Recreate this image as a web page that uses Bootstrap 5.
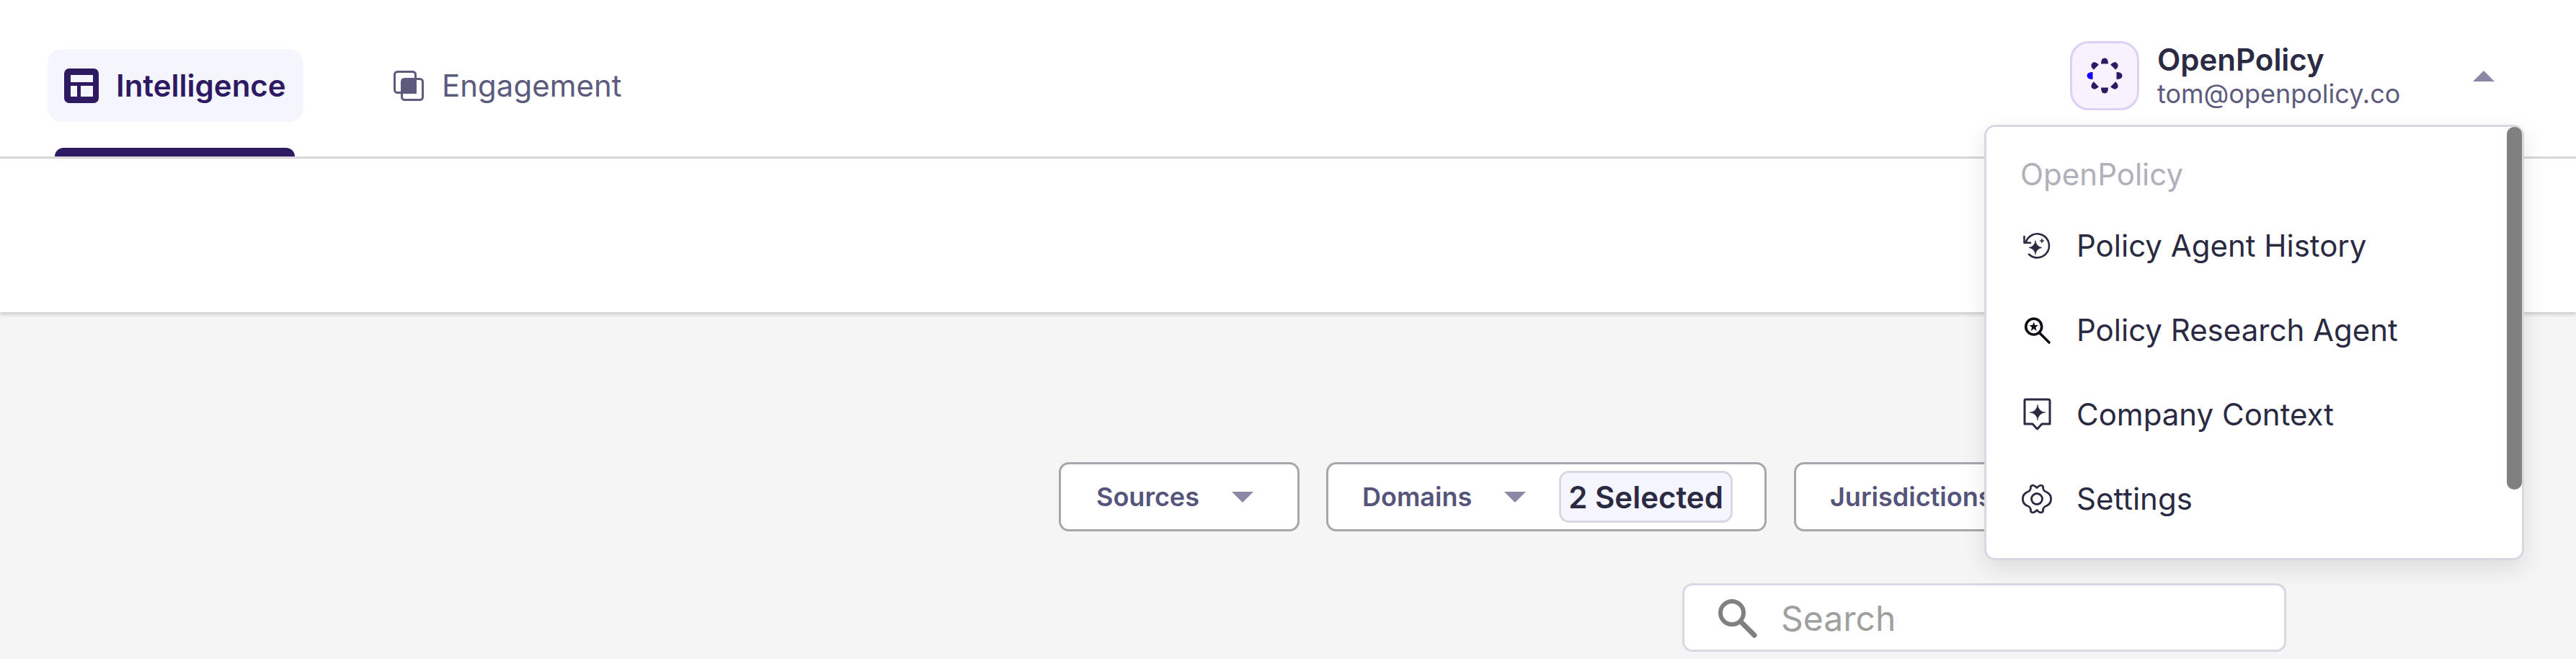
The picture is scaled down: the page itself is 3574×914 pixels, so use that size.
<!doctype html>
<html lang="en">
<head>
<meta charset="utf-8">
<title>OpenPolicy</title>
<link href="https://cdn.jsdelivr.net/npm/bootstrap@5.3.0/dist/css/bootstrap.min.css" rel="stylesheet">
<style>
html,body{height:914px;overflow:hidden}
body{font-family:Inter,"Liberation Sans",sans-serif;background:#f5f5f5;color:#2a2a42}
.op-page{height:914px}
.op-top{height:220px;background:#fff;border-bottom:3px solid #d9d9d9;padding-left:66px;padding-right:113px}
.op-tab-col{width:355px;margin-top:68px}
.op-pill{height:101px;padding:0 20px 0 23px;gap:24px;font-size:42px;font-weight:600;color:#2d1a63;background:#f5f5fd;border-radius:20px}
.op-tab-bar{height:12px;margin:36px 12px 0 10px;background:#2d1a63;border-radius:12px 12px 0 0}
.op-tab-plain{margin-top:68px;margin-left:125px;height:101px;gap:25px;font-size:42px;color:#5c5b7e}
.op-user{margin-top:57px;margin-left:auto;height:96px}
.op-logo{width:96px;height:96px;border:3px solid #dcd0f5;background:#f7f2fe;border-radius:26px}
.op-user-txt{margin-left:25px;width:438px}
.op-user-name{font-size:42px;font-weight:600;line-height:48px;margin-bottom:2px;color:#2a2a42}
.op-user-mail{font-size:36px;line-height:42px;color:#5c5b7e}
.op-tri-up{width:0;height:0;border-left:15px solid transparent;border-right:15px solid transparent;border-bottom:15px solid #8a88a6}
.op-tri-down{width:0;height:0;border-left:15px solid transparent;border-right:15px solid transparent;border-top:15px solid #8a88a6}
.op-sub{height:213px;background:#fff;box-shadow:0 3px 5px rgba(0,0,0,.18)}
.op-main{padding:208px 402px 0 0}
.op-filter-row{gap:37px}
.op-filter{height:96px;background:#fff;border:3px solid #a6a6ad;border-radius:14px;padding:0 44px 0 47px;font-size:36px;font-weight:600;color:#55547a}
.op-filter .op-tri-down{margin-left:45px}
.op-f1{width:334px;padding-left:49px}
.op-f2{width:611px}
.op-f3{width:683px;margin-left:1px}
.op-chip{height:72px;margin-left:46px;padding:0 10px;border:3px solid #d9d8e2;background:#f5f5fd;border-radius:14px;font-size:42px;font-weight:600;color:#2a2a42;white-space:nowrap;flex:none}
.op-search{width:838px;height:95px;margin-top:72px;background:#fff;border:3px solid #d9d8e2;border-radius:14px;padding-left:45px;gap:33px}
.op-search-txt{font-size:48px;color:#a0a0a0;padding-top:2px}
.op-menu{top:173px;right:72px;width:749px;height:604px;border:3px solid #d9d8e2;border-radius:15px;padding:0;background:#fff;box-shadow:0 12px 32px rgba(0,0,0,.1)}
.op-menu.dropdown-menu{display:block;position:absolute;margin:0}
.op-head{padding:0 0 0 47px;margin-top:43px;height:46px;line-height:46px;font-size:42px;color:#b0b0ba}
.op-item{display:flex;align-items:center;height:117px;padding:0 0 0 50px;gap:35px;font-size:42px;color:#2a2a42}
.op-head+.op-item{margin-top:17px}
.op-item svg{flex:none}
.op-item svg.op-gear{margin-left:-1px;margin-right:-1px}
.op-scroll{top:0;right:0;width:21px;height:503px;background:#808080;border-radius:10px}
</style>
</head>
<body>
<div class="op-page position-relative">
  <header class="op-top d-flex align-items-start">
    <div class="op-tab-col">
      <div class="op-pill d-flex align-items-center">
        <svg width="48" height="48" viewBox="0 0 48 48"><rect width="48" height="48" rx="7" fill="#2d1a63"/><rect x="9" y="9" width="31" height="10" fill="#f5f5fd"/><rect x="9" y="24" width="9" height="15" fill="#f5f5fd"/><rect x="23" y="24" width="17" height="15" fill="#f5f5fd"/></svg>
        <span>Intelligence</span>
      </div>
      <div class="op-tab-bar"></div>
    </div>
    <div class="op-tab-plain d-flex align-items-center">
      <svg width="42" height="42" viewBox="0 0 42 42"><rect x="11" y="11" width="21" height="21" fill="#5c5b7e"/><rect x="1.5" y="1.5" width="29" height="29" rx="4" fill="none" stroke="#5c5b7e" stroke-width="3"/><rect x="11.5" y="11.5" width="29" height="29" rx="4" fill="none" stroke="#5c5b7e" stroke-width="3"/></svg>
      <span>Engagement</span>
    </div>
    <div class="op-user d-flex align-items-center">
      <div class="op-logo d-flex align-items-center justify-content-center flex-shrink-0">
        <svg width="50" height="50" viewBox="-25 -25 50 50">
          <g fill="#2d1a63">
            <path d="M-5 -16.500Q-5 -24.500 0 -24.500Q5 -24.500 5 -16.500Z"/>
            <path d="M-5 -16.500Q-5 -24.500 0 -24.500Q5 -24.500 5 -16.500Z" transform="rotate(45)"/>
            <path d="M-5 -16.500Q-5 -24.500 0 -24.500Q5 -24.500 5 -16.500Z" transform="rotate(90)"/>
            <path d="M-5 -16.500Q-5 -24.500 0 -24.500Q5 -24.500 5 -16.500Z" transform="rotate(135)"/>
            <path d="M-5 -16.500Q-5 -24.500 0 -24.500Q5 -24.500 5 -16.500Z" transform="rotate(180)"/>
            <path d="M-5 -16.500Q-5 -24.500 0 -24.500Q5 -24.500 5 -16.500Z" transform="rotate(225)"/>
            <path d="M-5 -16.500Q-5 -24.500 0 -24.500Q5 -24.500 5 -16.500Z" transform="rotate(315)"/>
            <path d="M-5 -16.500Q-5 -24.500 0 -24.500Q5 -24.500 5 -16.500Z" transform="rotate(270)" fill="#1a00ff"/>
          </g>
        </svg>
      </div>
      <div class="op-user-txt">
        <div class="op-user-name">OpenPolicy</div>
        <div class="op-user-mail">tom@openpolicy.co</div>
      </div>
      <div class="op-tri-up"></div>
    </div>
  </header>
  <div class="op-sub"></div>
  <main class="op-main d-flex flex-column align-items-end">
    <div class="op-filter-row d-flex">
      <div class="op-filter op-f1 d-flex align-items-center"><span>Sources</span><div class="op-tri-down"></div></div>
      <div class="op-filter op-f2 d-flex align-items-center"><span>Domains</span><div class="op-tri-down"></div><div class="op-chip d-flex align-items-center">2 Selected</div></div>
      <div class="op-filter op-f3 d-flex align-items-center"><span>Jurisdictions</span></div>
    </div>
    <div class="op-search d-flex align-items-center">
      <svg width="56" height="56" viewBox="0 0 56 56"><circle cx="21" cy="21" r="16" fill="none" stroke="#808080" stroke-width="6"/><path d="M33 33L52 52" stroke="#808080" stroke-width="7" stroke-linecap="round"/></svg>
      <span class="op-search-txt">Search</span>
    </div>
  </main>
  <div class="dropdown-menu op-menu">
    <div class="op-head">OpenPolicy</div>
    <a class="op-item text-decoration-none" href="#">
      <svg width="40" height="40" viewBox="0 0 40 40"><path d="M4.7 15A16.500 16.500 0 1 1 9 31.700" fill="none" stroke="#2a2a42" stroke-width="2.600" stroke-linecap="round"/><path d="M2.500 7V15.800H11" fill="none" stroke="#2a2a42" stroke-width="2.600" stroke-linecap="round" stroke-linejoin="round"/><path d="M18 12.500Q19 21 27 22.500Q19 24 18 32.500Q17 24 9 22.500Q17 21 18 12.500Z" fill="#2a2a42" stroke="#2a2a42" stroke-width=".5"/><path d="M27 10V16M24 13H30" stroke="#2a2a42" stroke-width="1.600"/></svg>
      <span>Policy Agent History</span>
    </a>
    <a class="op-item text-decoration-none" href="#">
      <svg width="40" height="40" viewBox="0 0 40 40"><circle cx="15.700" cy="15" r="11" fill="none" stroke="#0d0d14" stroke-width="3.600"/><path d="M24 24L37 37" stroke="#0d0d14" stroke-width="3.600" stroke-linecap="round"/><path d="M15.700 8.500L17.400 13H22L18.300 16L19.700 21L15.700 18L11.700 21L13.100 16L9.400 13H14Z" fill="#0d0d14"/></svg>
      <span>Policy Research Agent</span>
    </a>
    <a class="op-item text-decoration-none" href="#">
      <svg width="40" height="46" viewBox="0 0 40 46"><path d="M4 2H36Q38 2 38 4V36H27L20.500 43L14 36H3V4Q3 2 4 2Z" fill="none" stroke="#2a2a42" stroke-width="3" stroke-linejoin="round"/><path d="M21 9Q22 19 32 20Q22 21 21 31Q20 21 10 20Q20 19 21 9Z" fill="#2a2a42" stroke="#2a2a42" stroke-width=".5"/></svg>
      <span>Company Context</span>
    </a>
    <a class="op-item text-decoration-none" href="#">
      <svg class="op-gear" width="42" height="42" viewBox="-21 -21 42 42"><path d="M0 -15.500Q5 -21 8.500 -17.500Q8 -11 13.500 -9.500Q20 -6 19.500 0Q20 6 13.500 9.500Q8 11 8.500 17.500Q5 21 0 15.500Q-5 21 -8.500 17.500Q-8 11 -13.500 9.500Q-20 6 -19.500 0Q-20 -6 -13.500 -9.500Q-8 -11 -8.500 -17.500Q-5 -21 0 -15.500Z" fill="none" stroke="#2a2a42" stroke-width="2.800" stroke-linejoin="round"/><circle r="7.500" fill="none" stroke="#2a2a42" stroke-width="2.800"/></svg>
      <span>Settings</span>
    </a>
    <div class="op-scroll position-absolute"></div>
  </div>
</div>
</body>
</html>
